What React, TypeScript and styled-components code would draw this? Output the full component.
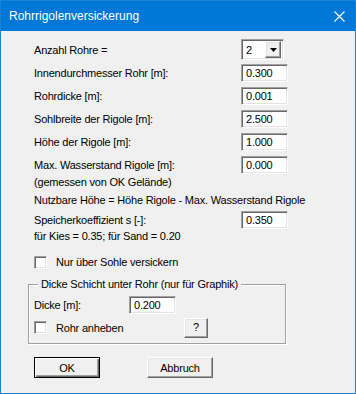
import styled, { createGlobalStyle } from "styled-components";

const GlobalStyle = createGlobalStyle`
  html, body {
    margin: 0;
    padding: 0;
    background: #f0f0f0;
  }
  body {
    font-family: "Liberation Sans", Arial, sans-serif;
  }
`;

const Window = styled.div`
  width: 356px;
  height: 394px;
  box-sizing: border-box;
  border: 1px solid #1883d7;
  display: flex;
  flex-direction: column;
  background: #f0f0f0;
  overflow: hidden;
`;

const TitleBar = styled.div`
  height: 30px;
  flex: none;
  display: flex;
  align-items: center;
  justify-content: space-between;
  padding: 0 10px 0 8px;
  background: #0078d7;
  color: #fff;
  font-size: 12px;
`;

const Content = styled.div`
  display: flex;
  flex-direction: column;
  padding: 8px 0 0 33px;
  font-size: 11px;
  letter-spacing: -0.2px;
  color: #000;
`;

const FieldRow = styled.div<{ $top?: number; $labelWidth?: number; $height?: number }>`
  display: grid;
  grid-template-columns: ${(p) => p.$labelWidth ?? 207}px auto;
  align-items: center;
  height: ${(p) => p.$height ?? 18}px;
  margin-top: ${(p) => p.$top ?? 0}px;
`;

const Label = styled.span`
  line-height: 14px;
  white-space: nowrap;
`;

const TextLine = styled.div<{ $top?: number }>`
  line-height: 14px;
  white-space: nowrap;
  margin-top: ${(p) => p.$top ?? 0}px;
`;

const sunken = `
  box-sizing: border-box;
  border: 1px solid;
  border-color: #a0a0a0 #fff #fff #a0a0a0;
  box-shadow: inset 1px 1px #696969, inset -1px -1px #e3e3e3;
  background: #fff;
`;

const TextBox = styled.div`
  ${sunken}
  width: 47px;
  height: 18px;
  padding-left: 4px;
  line-height: 16px;
  display: flex;
  align-items: center;
`;

const Combo = styled.div`
  ${sunken}
  width: 43px;
  height: 21px;
  display: flex;
  align-items: center;
  justify-content: space-between;
  padding: 2px 2px 2px 4px;
`;

const raised = `
  box-sizing: border-box;
  border: 1px solid;
  border-color: #fff #696969 #696969 #fff;
  box-shadow: inset -1px -1px #a0a0a0, inset 1px 1px #e3e3e3;
  background: #f0f0f0;
`;

const ComboArrow = styled.div`
  ${raised}
  width: 16px;
  height: 17px;
  display: flex;
  align-items: center;
  justify-content: center;
`;

const CheckRow = styled.div<{ $top?: number }>`
  display: flex;
  align-items: center;
  gap: 9px;
  margin-top: ${(p) => p.$top ?? 0}px;
`;

const CheckBox = styled.div`
  ${sunken}
  width: 13px;
  height: 13px;
  flex: none;
`;

const Group = styled.fieldset`
  box-sizing: border-box;
  width: 258px;
  margin: 8px 0 0 -6px;
  padding: 5px 5px 6px 5px;
  min-width: 0;
  border: 1px solid #a0a0a0;
  box-shadow: inset 1px 1px #fff, 1px 1px #fff;
`;

const Legend = styled.legend`
  margin-left: 4px;
  padding: 0 3px;
  line-height: 14px;
  white-space: nowrap;
`;

const GroupCheckRow = styled.div`
  display: flex;
  align-items: center;
  justify-content: space-between;
  width: 174px;
  height: 19px;
  margin-top: 4px;
`;

const HelpButton = styled.div`
  ${raised}
  width: 24px;
  height: 20px;
  display: flex;
  align-items: center;
  justify-content: center;
  padding-bottom: 2px;
`;

const ButtonRow = styled.div`
  display: flex;
  gap: 47px;
  margin-top: 13px;
`;

const Button = styled.div<{ $default?: boolean }>`
  box-sizing: border-box;
  width: 66px;
  height: 21px;
  display: flex;
  align-items: center;
  justify-content: center;
  background: #f0f0f0;
  border: 1px solid ${(p) => (p.$default ? "#000" : "#fff")};
  border-color: ${(p) => (p.$default ? "#000" : "#fff #696969 #696969 #fff")};
  box-shadow: ${(p) =>
    p.$default
      ? "inset 1px 1px #fff, inset -1px -1px #696969, inset -2px -2px #a0a0a0"
      : "inset -1px -1px #a0a0a0, inset 1px 1px #e3e3e3"};
`;

function CloseIcon() {
  return (
    <svg width="11" height="11" viewBox="0 0 11 11">
      <path d="M0.5 0.5 L10.5 10.5 M10.5 0.5 L0.5 10.5" stroke="#fff" strokeWidth="1.1" />
    </svg>
  );
}

function DownArrow() {
  return (
    <svg width="7" height="4" viewBox="0 0 7 4">
      <path d="M0 0 H7 L3.5 4 Z" fill="#000" />
    </svg>
  );
}

const fields = [
  { label: "Innendurchmesser Rohr [m]:", value: "0.300" },
  { label: "Rohrdicke [m]:", value: "0.001" },
  { label: "Sohlbreite der Rigole [m]:", value: "2.500" },
  { label: "Höhe der Rigole [m]:", value: "1.000" },
  { label: "Max. Wasserstand Rigole [m]:", value: "0.000" },
];

export default function App() {
  return (
    <>
      <GlobalStyle />
      <Window>
        <TitleBar>
          <span>Rohrrigolenversickerung</span>
          <CloseIcon />
        </TitleBar>

        <Content>
          <FieldRow $height={21}>
            <Label>Anzahl Rohre =</Label>
            <Combo>
              <span>2</span>
              <ComboArrow>
                <DownArrow />
              </ComboArrow>
            </Combo>
          </FieldRow>

          {fields.map((f, i) => (
            <FieldRow key={f.label} $top={i === 0 ? 4 : 5}>
              <Label>{f.label}</Label>
              <TextBox>{f.value}</TextBox>
            </FieldRow>
          ))}

          <TextLine $top={1}>(gemessen von OK Gelände)</TextLine>
          <TextLine $top={4}>Nutzbare Höhe = Höhe Rigole - Max. Wasserstand Rigole</TextLine>

          <FieldRow $top={4}>
            <Label>Speicherkoeffizient s [-]:</Label>
            <TextBox>0.350</TextBox>
          </FieldRow>
          <TextLine>für Kies = 0.35; für Sand = 0.20</TextLine>

          <CheckRow $top={12}>
            <CheckBox />
            <Label>Nur über Sohle versickern</Label>
          </CheckRow>

          <Group>
            <Legend>Dicke Schicht unter Rohr (nur für Graphik)</Legend>
            <FieldRow $labelWidth={95}>
              <Label>Dicke [m]:</Label>
              <TextBox>0.200</TextBox>
            </FieldRow>
            <GroupCheckRow>
              <CheckRow>
                <CheckBox />
                <Label>Rohr anheben</Label>
              </CheckRow>
              <HelpButton>?</HelpButton>
            </GroupCheckRow>
          </Group>

          <ButtonRow>
            <Button $default>OK</Button>
            <Button>Abbruch</Button>
          </ButtonRow>
        </Content>
      </Window>
    </>
  );
}
